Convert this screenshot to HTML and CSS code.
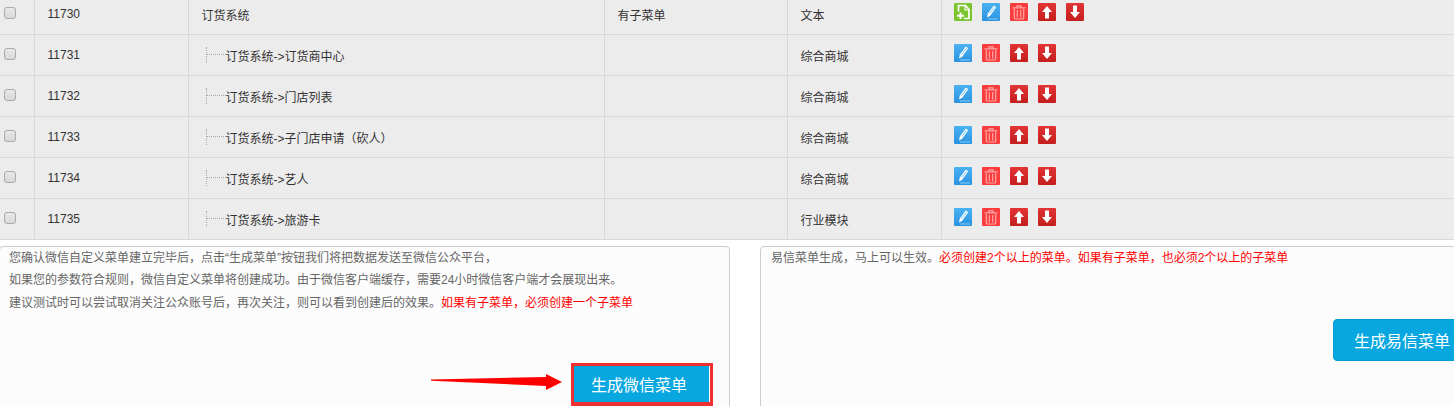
FILE: index.html
```html
<!DOCTYPE html>
<html lang="zh-CN">
<head>
<meta charset="utf-8">
<title>菜单管理</title>
<link rel="stylesheet" href="styles.css">
</head>
<body>
<svg class="defs" width="0" height="0" aria-hidden="true">
  <defs>
    <linearGradient id="g-red" x1="0" y1="0" x2="0" y2="1"><stop offset="0" stop-color="#e23434"/><stop offset="1" stop-color="#c41e1e"/></linearGradient>
    <linearGradient id="g-blue" x1="0" y1="0" x2="0" y2="1"><stop offset="0" stop-color="#4ab2f2"/><stop offset="1" stop-color="#2a93e0"/></linearGradient>
    <symbol id="i-add" viewBox="0 0 18 18"><rect width="18" height="18" rx="1" fill="#7cc42e"/><path d="M4.500 8.500V2.500h7L15 6.500v9H10" fill="none" stroke="#fff" stroke-width="1.700"/><path d="M11 3v4h4" fill="none" stroke="#fff" stroke-width="1.200"/><path d="M6.500 9.500v6.500M3 12.800h7" stroke="#fff" stroke-width="2"/></symbol>
    <symbol id="i-edit" viewBox="0 0 18 18"><rect width="18" height="18" rx="1" fill="url(#g-blue)"/><path d="M5.800 10.500L11.800 2.500L14.200 4.300L8.200 12.700L5 14.500Z" fill="#fff"/><path d="M7.500 10.700L12.500 4.200" stroke="#4ab2f2" stroke-width=".7"/><path d="M6 16h10" stroke="#8ccaf5" stroke-width="1"/></symbol>
    <symbol id="i-del" viewBox="0 0 18 18"><rect width="18" height="18" rx="1" fill="#fb3c3c"/><path d="M2.500 4.800h13M7 4.500V2.800h4v1.700" fill="none" stroke="#ffa8a8" stroke-width="1.200"/><path d="M4.300 6v9q0 1 1 1h7.400q1 0 1-1V6M7.300 7v7.500M10.700 7v7.500" fill="none" stroke="#ffa8a8" stroke-width="1.200"/></symbol>
    <symbol id="i-up" viewBox="0 0 18 18"><rect width="18" height="18" rx="1" fill="url(#g-red)"/><path d="M9 3L14 9H11V15.500H7V9H4Z" fill="#fff"/></symbol>
    <symbol id="i-down" viewBox="0 0 18 18"><rect width="18" height="18" rx="1" fill="url(#g-red)"/><path d="M9 15L14 9H11V2.500H7V9H4Z" fill="#fff"/></symbol>
  </defs>
</svg>
<table class="grid">
  <colgroup><col class="c1"><col class="c2"><col class="c3"><col class="c4"><col class="c5"><col class="c6"></colgroup>
  <tr class="row first">
    <td><input class="check" type="checkbox"></td><td>11730</td><td class="name">订货系统</td><td class="name">有子菜单</td><td class="name">文本</td>
    <td><div class="ops"><svg class="ic"><use href="#i-add"/></svg><svg class="ic"><use href="#i-edit"/></svg><svg class="ic"><use href="#i-del"/></svg><svg class="ic"><use href="#i-up"/></svg><svg class="ic"><use href="#i-down"/></svg></div></td>
  </tr>
  <tr class="row">
    <td><input class="check" type="checkbox"></td><td>11731</td><td class="name"><span class="tree">订货系统-&gt;订货商中心</span></td><td></td><td class="name">综合商城</td>
    <td><div class="ops"><svg class="ic"><use href="#i-edit"/></svg><svg class="ic"><use href="#i-del"/></svg><svg class="ic"><use href="#i-up"/></svg><svg class="ic"><use href="#i-down"/></svg></div></td>
  </tr>
  <tr class="row">
    <td><input class="check" type="checkbox"></td><td>11732</td><td class="name"><span class="tree">订货系统-&gt;门店列表</span></td><td></td><td class="name">综合商城</td>
    <td><div class="ops"><svg class="ic"><use href="#i-edit"/></svg><svg class="ic"><use href="#i-del"/></svg><svg class="ic"><use href="#i-up"/></svg><svg class="ic"><use href="#i-down"/></svg></div></td>
  </tr>
  <tr class="row">
    <td><input class="check" type="checkbox"></td><td>11733</td><td class="name"><span class="tree">订货系统-&gt;子门店申请（砍人）</span></td><td></td><td class="name">综合商城</td>
    <td><div class="ops"><svg class="ic"><use href="#i-edit"/></svg><svg class="ic"><use href="#i-del"/></svg><svg class="ic"><use href="#i-up"/></svg><svg class="ic"><use href="#i-down"/></svg></div></td>
  </tr>
  <tr class="row">
    <td><input class="check" type="checkbox"></td><td>11734</td><td class="name"><span class="tree">订货系统-&gt;艺人</span></td><td></td><td class="name">综合商城</td>
    <td><div class="ops"><svg class="ic"><use href="#i-edit"/></svg><svg class="ic"><use href="#i-del"/></svg><svg class="ic"><use href="#i-up"/></svg><svg class="ic"><use href="#i-down"/></svg></div></td>
  </tr>
  <tr class="row">
    <td><input class="check" type="checkbox"></td><td>11735</td><td class="name"><span class="tree">订货系统-&gt;旅游卡</span></td><td></td><td class="name">行业模块</td>
    <td><div class="ops"><svg class="ic"><use href="#i-edit"/></svg><svg class="ic"><use href="#i-del"/></svg><svg class="ic"><use href="#i-up"/></svg><svg class="ic"><use href="#i-down"/></svg></div></td>
  </tr>
</table>
<div class="panels">
  <section class="panel left">
    <p class="note">您确认微信自定义菜单建立完毕后，点击“生成菜单”按钮我们将把数据发送至微信公众平台，</p>
    <p class="note">如果您的参数符合规则，微信自定义菜单将创建成功。由于微信客户端缓存，需要24小时微信客户端才会展现出来。</p>
    <p class="note">建议测试时可以尝试取消关注公众账号后，再次关注，则可以看到创建后的效果。<span class="warn">如果有子菜单，必须创建一个子菜单</span></p>
    <div class="action">
      <svg class="arrow" width="132" height="17" viewBox="0 0 132 17"><path d="M0 5.500L115 3V0L131 8L115 16V12L0 6.700Z" fill="#f00"/></svg>
      <button class="btn boxed" type="button">生成微信菜单</button>
    </div>
  </section>
  <section class="panel right">
    <p class="note">易信菜单生成，马上可以生效。<span class="warn">必须创建2个以上的菜单。如果有子菜单，也必须2个以上的子菜单</span></p>
    <div class="action2"><button class="btn plain" type="button">生成易信菜单</button></div>
  </section>
</div>
</body>
</html>
```
FILE: styles.css
```css
html, body {
  margin: 0;
  height: 406px;
  overflow: hidden;
  background: #fff;
}
body {
  font-family: "Liberation Sans", "Noto Sans CJK SC", sans-serif;
  font-size: 12px;
  color: #333;
}
.defs { position: absolute; }
.grid {
  width: 1454px;
  table-layout: fixed;
  border-collapse: collapse;
  background: #ececec;
}
.c1 { width: 34px; }
.c2 { width: 154px; }
.c3 { width: 416px; }
.c4 { width: 183px; }
.c5 { width: 154px; }
.row td {
  padding: 0 0 0 13px;
  border-bottom: 1px solid #d9d9d9;
  border-left: 1px solid #d9d9d9;
  box-sizing: border-box;
  height: 41px;
  vertical-align: middle;
}
.row td:first-child { padding-left: 4px; border-left: 0; }
.row.first td { height: 34px; padding-bottom: 5px; }
.row:not(.first) td.name { padding-top: 2px; }
.name { font-size: 12px; }
.check {
  appearance: none;
  display: block;
  width: 12px;
  height: 12px;
  margin: 0 0 2px;
  background: linear-gradient(#e8e8e8, #d8d8d8);
  border: 1px solid #aaa;
  border-radius: 3px;
  box-sizing: border-box;
}
.ops {
  display: flex;
  gap: 10px;
  margin: 0 0 4px -1px;
}
.ic { width: 18px; height: 18px; display: block; }
.tree {
  display: block;
  position: relative;
  margin-left: 24px;
  text-spacing-trim: space-all;
}
.tree::before {
  content: "";
  position: absolute;
  left: -20px;
  top: 0;
  height: 16px;
  border-left: 1px dotted #aaa;
}
.tree::after {
  content: "";
  position: absolute;
  left: -20px;
  top: 7px;
  width: 20px;
  border-top: 1px dotted #aaa;
}
.panels {
  display: flex;
  gap: 30px;
  margin: 6px 0 0 -1px;
  background: #fff;
}
.panel {
  background: #fcfcfc;
  border: 1px solid #ccc;
  border-radius: 4px;
  box-sizing: border-box;
  height: 240px;
  flex: none;
}
.panel.left { width: 731px; padding: 0 9px; }
.panel.right { width: 720px; padding: 0 10px; }
.note {
  margin: 0;
  line-height: 22.500px;
  color: #666;
}
.warn { color: #f00; }
.action {
  display: flex;
  justify-content: flex-end;
  align-items: flex-start;
  gap: 8px;
  margin-top: 48.500px;
  padding-right: 7px;
}
.arrow { display: block; flex: none; margin-top: 11px; }
.action2 {
  display: flex;
  justify-content: flex-end;
  margin: 49.500px -2px 0 0;
}
.btn {
  font: 16px "Liberation Sans", "Noto Sans CJK SC", sans-serif;
  color: #fff;
  background: #08a7e0;
  padding: 0;
}
.btn.plain {
  width: 138px;
  height: 42px;
  border: 1px solid #069dd4;
  border-radius: 4px;
}
.btn.boxed {
  width: 142px;
  height: 43px;
  border: 3px solid #f03030;
  border-bottom-width: 4px;
  border-radius: 0;
  padding-right: 6px;
  box-shadow: inset -1px 0 0 #fff;
}
```
